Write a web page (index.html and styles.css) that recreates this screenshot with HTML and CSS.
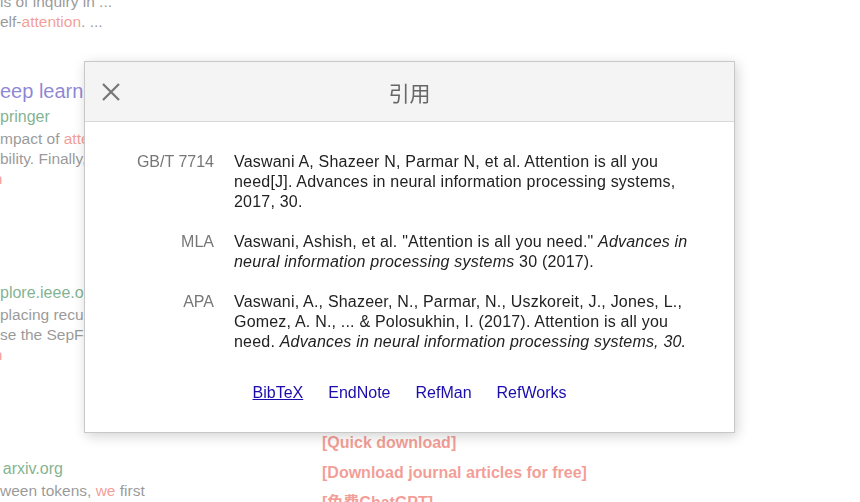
FILE: index.html
```html
<!DOCTYPE html>
<html lang="zh">
<head>
    <meta charset="UTF-8">
    <meta name="viewport" content="width=device-width, initial-scale=1.0">
    <title>引用</title>
    <link rel="stylesheet" href="styles.css">
</head>
<body>
    <!-- Search results (behind the dialog) -->
    <div class="results">
        <div class="result result-first">
            <div class="r-main">
                <div class="r-snippet">ls of inquiry in ...</div>
                <div class="r-snippet">elf-<em>attention</em>. ...</div>
            </div>
        </div>

        <div class="result">
            <div class="r-main">
                <h3 class="r-title">eep learning</h3>
                <div class="r-source">pringer</div>
                <div class="r-snippet">mpact of <em>attention</em> mechanisms</div>
                <div class="r-snippet">bility. Finally, we</div>
                <div class="r-foot"><em>n</em></div>
            </div>
        </div>

        <div class="result">
            <div class="r-main">
                <div class="r-title"></div>
                <div class="r-source">plore.ieee.org</div>
                <div class="r-snippet">placing recurrent</div>
                <div class="r-snippet">se the SepFormer</div>
                <div class="r-foot"><em>n</em></div>
            </div>
        </div>

        <div class="result">
            <div class="r-main">
                <div class="r-title"></div>
                <div class="r-source r-source-cut">- arxiv.org</div>
                <div class="r-snippet">ween tokens, <em>we</em> first</div>
            </div>
            <div class="r-side">
                <a href="#">[Quick download]</a>
                <a href="#">[Download journal articles for free]</a>
                <a href="#">[免费ChatGPT]</a>
            </div>
        </div>
    </div>

    <div class="backdrop"></div>

    <!-- Cite dialog -->
    <div class="cite-dialog">
        <div class="cite-head">
            <button class="close-btn" aria-label="关闭">
                <svg width="18" height="18" viewBox="0 0 18 18">
                    <path d="M1 1L17 17M17 1L1 17" stroke="#777" stroke-width="2.2" fill="none"/>
                </svg>
            </button>
            <div class="cite-title">引用</div>
            <div></div>
        </div>

        <div class="cite-body">
            <div class="cite-table">
                <div class="cite-label">GB/T 7714</div>
                <div class="cite-text">Vaswani A, Shazeer N, Parmar N, et al. Attention is all you need[J]. Advances in neural information processing systems, 2017, 30.</div>

                <div class="cite-label">MLA</div>
                <div class="cite-text">Vaswani, Ashish, et al. "Attention is all you need." <i>Advances in neural information processing systems</i> 30 (2017).</div>

                <div class="cite-label">APA</div>
                <div class="cite-text">Vaswani, A., Shazeer, N., Parmar, N., Uszkoreit, J., Jones, L., Gomez, A. N., ... &amp; Polosukhin, I. (2017). Attention is all you need. <i>Advances in neural information processing systems, 30.</i></div>
            </div>

            <div class="cite-links">
                <a href="#" class="active">BibTeX</a>
                <a href="#">EndNote</a>
                <a href="#">RefMan</a>
                <a href="#">RefWorks</a>
            </div>
        </div>
    </div>
</body>
</html>
```

FILE: styles.css
```css
* {
    margin: 0;
    padding: 0;
    box-sizing: border-box;
}

:root {
    --link: #1a0dab;
    --green: #006621;
    --red: #e53d2e;
    --text: #222;
    --label: #777;
}

body {
    font-family: 'Liberation Sans', Arial, 'Noto Sans CJK SC', sans-serif;
    background: #fff;
    color: var(--text);
    overflow: hidden;
}

/* Results behind the dialog */
.results {
    margin-top: -8px;
}

.result {
    display: grid;
    grid-template-columns: 312px 1fr;
    column-gap: 10px;
    margin-bottom: 66px;
}

.result-first {
    margin-bottom: 47px;
}

.r-main {
    overflow: hidden;
    white-space: nowrap;
}

.r-main em {
    font-style: normal;
    color: var(--red);
}

.r-title {
    font-size: 20px;
    font-weight: normal;
    line-height: 24px;
    height: 24px;
    color: var(--link);
}

.r-source {
    font-size: 16px;
    line-height: 20px;
    margin-top: 4px;
    color: var(--green);
}

.r-source-cut {
    text-indent: -7px;
}

.r-snippet {
    font-size: 15.5px;
    line-height: 20px;
    color: #333;
}

.r-source + .r-snippet {
    margin-top: 2px;
}

.r-foot {
    font-size: 15px;
    line-height: 20px;
    text-indent: -6px;
}

.r-side {
    display: flex;
    flex-direction: column;
    margin-top: -3px;
}

.r-side a {
    font-size: 16px;
    font-weight: bold;
    line-height: 30px;
    color: var(--red);
    text-decoration: none;
}

.backdrop {
    position: fixed;
    inset: 0;
    background: rgba(255, 255, 255, 0.5);
}

/* Cite dialog */
.cite-dialog {
    position: fixed;
    left: 84px;
    top: 61px;
    width: 651px;
    background: #fff;
    border: 1px solid #c8c8c8;
    box-shadow: 2px 3px 12px rgba(0, 0, 0, 0.18);
}

.cite-head {
    display: grid;
    grid-template-columns: 1fr auto 1fr;
    align-items: center;
    height: 60px;
    background: #f4f4f4;
    border-bottom: 1px solid #d9d9d9;
}

.close-btn {
    justify-self: start;
    margin-left: 16px;
    width: 20px;
    height: 20px;
    border: none;
    background: none;
    cursor: pointer;
    display: flex;
    align-items: center;
    justify-content: center;
}

.cite-title {
    font-family: 'Noto Sans CJK SC', sans-serif;
    font-size: 21px;
    color: #666;
    line-height: 24px;
}

.cite-body {
    padding: 30px 39px 29px 24px;
}

.cite-table {
    display: grid;
    grid-template-columns: 105px 1fr;
    column-gap: 20px;
    row-gap: 20px;
}

.cite-label {
    text-align: right;
    font-size: 16px;
    line-height: 20px;
    color: var(--label);
}

.cite-text {
    font-size: 16px;
    line-height: 20px;
    letter-spacing: 0.2px;
    color: var(--text);
}

.cite-links {
    display: flex;
    justify-content: center;
    gap: 25px;
    margin-top: 31px;
    padding-left: 15px;
}

.cite-links a {
    font-size: 16px;
    line-height: 20px;
    color: var(--link);
    text-decoration: none;
}

.cite-links a.active {
    text-decoration: underline;
}
```
